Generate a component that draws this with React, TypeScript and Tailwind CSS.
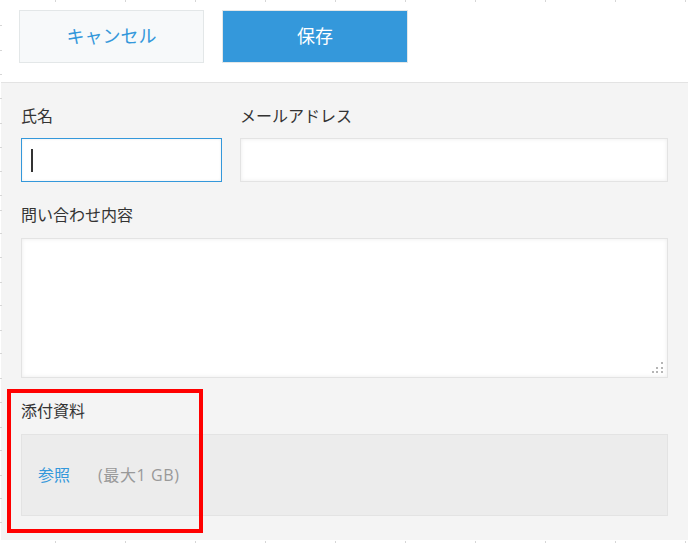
import React from "react";

/* ── Ruler ticks along the page edges ── */
const topTicks = [55, 125, 195, 265, 335, 405, 475, 545, 615, 685];
const sideTicks = [25, 50, 74, 98, 123, 147, 171, 195, 210, 233, 257, 282, 305, 330, 353, 378, 402, 427, 450, 475, 498, 522];

function Ticks() {
  return (
    <>
      {topTicks.map((x) => (
        <span key={`t${x}`} className="absolute top-0 h-[2px] w-px bg-[#d6d6d6]" style={{ left: x }} />
      ))}
      {topTicks.map((x) => (
        <span key={`b${x}`} className="absolute bottom-0 h-[2px] w-px bg-[#d6d6d6]" style={{ left: x }} />
      ))}
      {sideTicks.map((y) => (
        <span key={`s${y}`} className="absolute left-0 h-px w-[2px] bg-[#d6d6d6]" style={{ top: y }} />
      ))}
    </>
  );
}

/* ── Field label ── */
function Label({ children }: { children: React.ReactNode }) {
  return <div className="h-6 text-[16px] leading-6 text-[#333333]">{children}</div>;
}

/* ── Resize grip dots ── */
function Grip() {
  return (
    <svg className="absolute right-[3px] bottom-[3px]" width="12" height="12" viewBox="0 0 12 12">
      {[
        [9, 0],
        [4, 5],
        [9, 5],
        [0, 9],
        [4, 9],
        [9, 9],
      ].map(([x, y]) => (
        <rect key={`${x}-${y}`} x={x} y={y} width="2" height="2" fill="#b5b5b5" />
      ))}
    </svg>
  );
}

export default function App() {
  return (
    <div
      className="relative h-[543px] w-[688px] overflow-hidden bg-white"
      style={{ fontFamily: '"Open Sans", "Noto Sans CJK JP", sans-serif' }}
    >
      <Ticks />

      {/* ── Action bar ── */}
      <div className="flex h-[82px] gap-[18px] pl-[19px] pt-[10px]">
        <button className="h-[53px] w-[185px] border border-[#e3e7e8] bg-[#f7f9fa] text-[18px] text-[#3498db]">
          キャンセル
        </button>
        <button className="h-[53px] w-[186px] border border-[#e3e7e8] bg-[#3498db] text-[18px] text-white">
          保存
        </button>
      </div>

      {/* ── Form panel ── */}
      <div className="ml-px h-[458px] border-t border-[#e3e3e3] bg-[#f4f4f4] pl-5 pr-[20px] pt-[21px]">
        <div className="flex gap-[18px]">
          <div className="w-[201px]">
            <Label>氏名</Label>
            <div className="mt-[10px] flex h-[44px] items-center border border-[#3498db] bg-white pl-[9px] shadow-[inset_0_0_3px_rgba(0,0,0,0.08)]">
              <span className="h-[23px] w-[2px] bg-[#333333]" />
            </div>
          </div>
          <div className="flex-1">
            <Label>メールアドレス</Label>
            <div className="mt-[10px] h-[44px] border border-[#e3e3e3] bg-white shadow-[inset_0_0_4px_rgba(0,0,0,0.08)]" />
          </div>
        </div>

        <div className="mt-[21px]">
          <Label>問い合わせ内容</Label>
          <div className="relative mt-[11px] h-[140px] border border-[#e3e3e3] bg-white shadow-[inset_0_0_4px_rgba(0,0,0,0.08)]">
            <Grip />
          </div>
        </div>

        <div className="mt-[21px]">
          <Label>添付資料</Label>
          <div className="mt-[11px] flex h-[82px] items-center gap-[28px] border border-[#e3e3e3] bg-[#ececec] pl-4 text-[16px]">
            <span className="text-[#3498db]">参照</span>
            <span className="tracking-[0.6px] text-[#999999]">(最大1 GB)</span>
          </div>
        </div>
      </div>

      {/* ── Annotation ── */}
      <div className="absolute left-[7px] top-[389px] h-[144px] w-[196px] border-4 border-[#ff0000]" />
    </div>
  );
}
